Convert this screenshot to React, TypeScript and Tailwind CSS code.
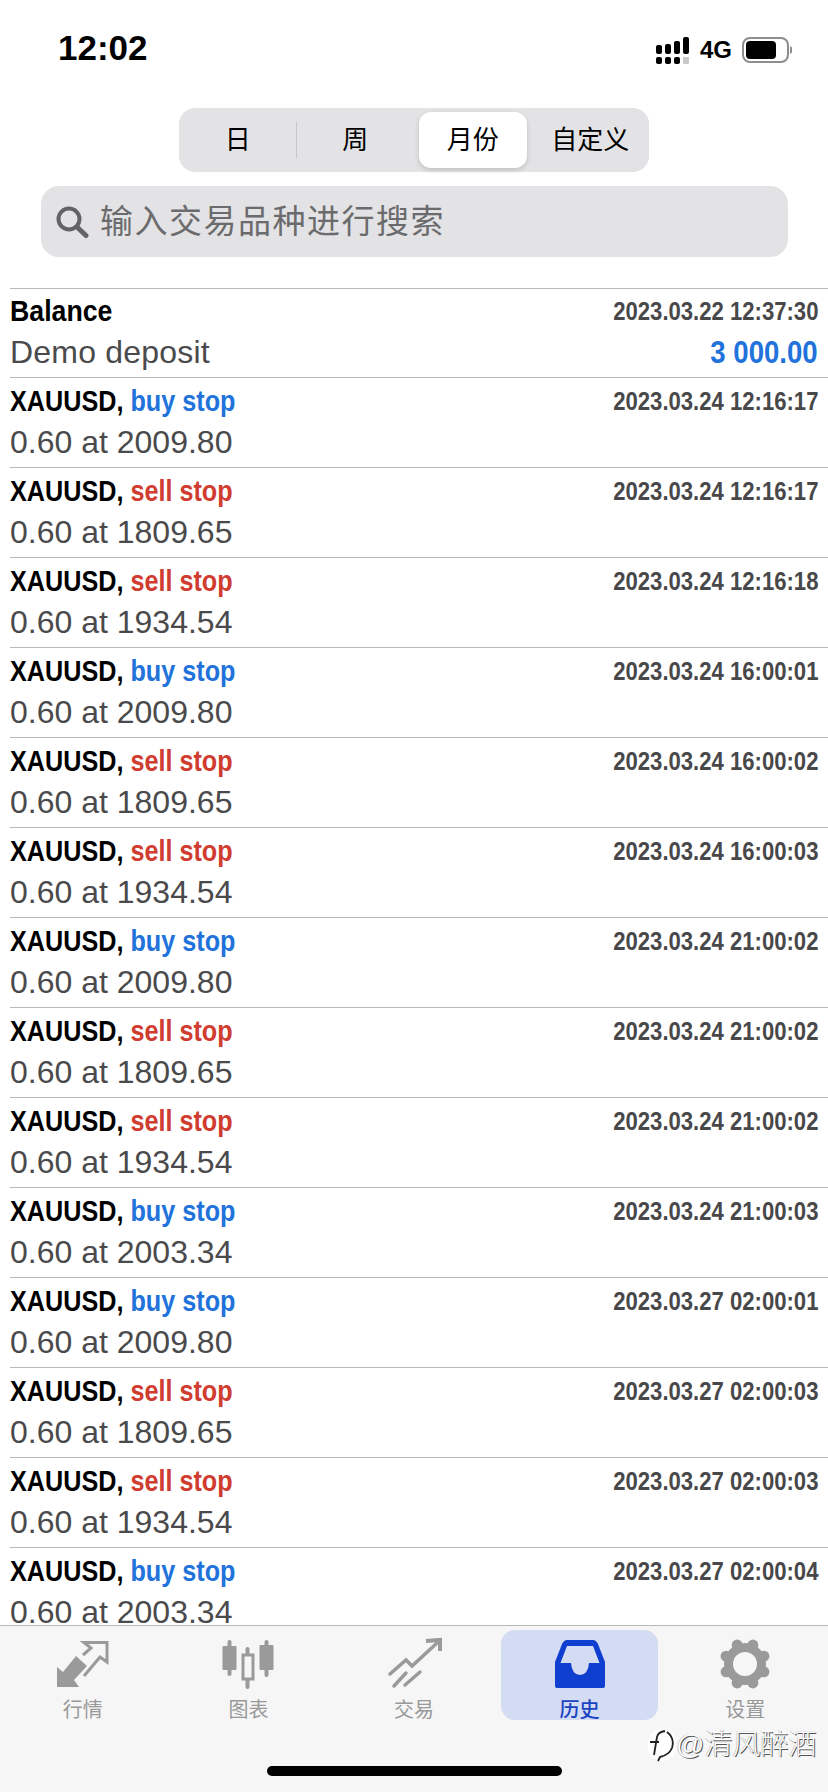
const ROWS = [
  { side: "buy stop", time: "2023.03.24 12:16:17", detail: "0.60 at 2009.80" },
  { side: "sell stop", time: "2023.03.24 12:16:17", detail: "0.60 at 1809.65" },
  { side: "sell stop", time: "2023.03.24 12:16:18", detail: "0.60 at 1934.54" },
  { side: "buy stop", time: "2023.03.24 16:00:01", detail: "0.60 at 2009.80" },
  { side: "sell stop", time: "2023.03.24 16:00:02", detail: "0.60 at 1809.65" },
  { side: "sell stop", time: "2023.03.24 16:00:03", detail: "0.60 at 1934.54" },
  { side: "buy stop", time: "2023.03.24 21:00:02", detail: "0.60 at 2009.80" },
  { side: "sell stop", time: "2023.03.24 21:00:02", detail: "0.60 at 1809.65" },
  { side: "sell stop", time: "2023.03.24 21:00:02", detail: "0.60 at 1934.54" },
  { side: "buy stop", time: "2023.03.24 21:00:03", detail: "0.60 at 2003.34" },
  { side: "buy stop", time: "2023.03.27 02:00:01", detail: "0.60 at 2009.80" },
  { side: "sell stop", time: "2023.03.27 02:00:03", detail: "0.60 at 1809.65" },
  { side: "sell stop", time: "2023.03.27 02:00:03", detail: "0.60 at 1934.54" },
  { side: "buy stop", time: "2023.03.27 02:00:04", detail: "0.60 at 2003.34" },
];

const SEGMENTS = ["日", "周", "月份", "自定义"];

function SignalIcon() {
  return (
    <svg aria-hidden="true" width="34" height="27" viewBox="0 0 34 27">
      <rect x="0" y="8" width="6" height="9" rx="2" fill="#000" />
      <rect x="9" y="7" width="6" height="10" rx="2" fill="#000" />
      <rect x="18" y="4" width="6" height="13" rx="2" fill="#000" />
      <rect x="27" y="0" width="6" height="17" rx="2" fill="#000" />
      <rect x="0" y="20" width="6" height="7" rx="2" fill="#000" />
      <rect x="9" y="20" width="6" height="7" rx="2" fill="#000" />
      <rect x="18" y="20" width="6" height="7" rx="2" fill="#000" />
      <rect x="27" y="20" width="6" height="7" rx="1" fill="#c8c8c8" />
    </svg>
  );
}

function BatteryIcon() {
  return (
    <svg aria-hidden="true" width="50" height="26" viewBox="0 0 50 26">
      <rect x="1" y="1" width="45" height="24" rx="7" fill="#fff" stroke="#8e8e8e" strokeWidth="2" />
      <rect x="4" y="4" width="30" height="18" rx="4" fill="#000" />
      <path d="M48 9 L50 10.5 V15.5 L48 17 Z" fill="#8e8e8e" />
    </svg>
  );
}

function SearchIcon() {
  return (
    <svg aria-hidden="true" width="34" height="32" viewBox="0 0 34 32" fill="none" stroke="#636366">
      <circle cx="14" cy="13" r="10.5" strokeWidth="4" />
      <path d="M22 21 L31 29.5" strokeWidth="5" strokeLinecap="round" />
    </svg>
  );
}

function QuotesIcon() {
  return (
    <svg aria-hidden="true" width="66" height="58" viewBox="0 0 66 58">
      <path d="M7 52 L7 32 L13 37 L26 21 L37 31 L24 45 L29 52 Z" fill="#9a9a9a" />
      <path d="M33 20 L41 13 L34 7.5 L57 7.5 L57 27 L50 22 L34 41" fill="none" stroke="#9a9a9a" strokeWidth="3" />
    </svg>
  );
}

function ChartIcon() {
  return (
    <svg aria-hidden="true" width="60" height="52" viewBox="-1.5 0 60 52" fill="#9a9a9a">
      <rect x="8" y="2" width="4" height="36" rx="2" />
      <rect x="3" y="8" width="14" height="24" rx="1" />
      <rect x="26" y="9" width="4" height="42" rx="2" />
      <rect x="23.5" y="17" width="10" height="24" fill="#f6f6f7" stroke="#9a9a9a" strokeWidth="3" />
      <rect x="45" y="2" width="4" height="37" rx="2" />
      <rect x="40" y="7" width="14" height="25" rx="1" />
    </svg>
  );
}

function TradeIcon() {
  return (
    <svg aria-hidden="true" width="66" height="58" viewBox="0 0 66 58" fill="none" stroke="#9a9a9a" strokeLinecap="round">
      <path d="M9 39 L25 25 L31 31 L56 8" strokeWidth="3.5" />
      <path d="M45 6 L59 5 L59 16" strokeWidth="4" strokeLinecap="butt" />
      <path d="M13 51 L25 38 M24 50 L39 37" strokeWidth="3.5" />
    </svg>
  );
}

function HistoryIcon() {
  return (
    <svg aria-hidden="true" width="66" height="58" viewBox="0 0 66 58">
      <path
        fillRule="evenodd"
        fill="#0f3fd0"
        d="M20 5 H46 Q49 5 51 9 L58 27 V51 Q58 53 56 53 H10 Q8 53 8 51 V27 L15 9 Q17 5 20 5 Z M20 11 L13.5 28 H24 Q25 40 33 40 Q41 40 42 28 H52.5 L46 11 Z"
      />
    </svg>
  );
}

function SettingsIcon() {
  const teeth = [0, 45, 90, 135, 180, 225, 270, 315];
  return (
    <svg aria-hidden="true" width="52" height="52" viewBox="0 0 52 52" fill="#9a9a9a">
      <circle cx="26" cy="26" r="21" />
      {teeth.map((angle) => (
        <circle
          key={angle}
          cx={26 + 20.5 * Math.cos(((angle + 22.5) * Math.PI) / 180)}
          cy={26 + 20.5 * Math.sin(((angle + 22.5) * Math.PI) / 180)}
          r="5.5"
        />
      ))}
      <circle cx="26" cy="26" r="12" fill="#f6f6f7" />
    </svg>
  );
}

const TABS = [
  { label: "行情", icon: <QuotesIcon />, active: false },
  { label: "图表", icon: <ChartIcon />, active: false },
  { label: "交易", icon: <TradeIcon />, active: false },
  { label: "历史", icon: <HistoryIcon />, active: true },
  { label: "设置", icon: <SettingsIcon />, active: false },
];

function HistoryRow({ side, time, detail }: { side: string; time: string; detail: string }) {
  const isBuy = side.startsWith("buy");

  return (
    <div className="h-[90px] shrink-0 border-t border-[#b8b8b8] pr-[10px]">
      <div className="flex h-[46px] items-center justify-between">
        <span className="inline-block origin-left -translate-y-[1px] scale-x-[0.84] text-[30px] font-bold whitespace-nowrap text-black">
          XAUUSD, <span className={isBuy ? "text-[#2272dc]" : "text-[#d03c30]"}>{side}</span>
        </span>
        <span className="inline-block origin-right scale-x-[0.85] text-[26px] font-bold text-[#48484a]">{time}</span>
      </div>
      <div className="flex h-[36px] items-center text-[32px] text-[#4a4a4c]">{detail}</div>
    </div>
  );
}

export default function App() {
  return (
    <div className="relative flex h-[1792px] w-[828px] flex-col overflow-hidden bg-white [font-family:'Liberation_Sans','Noto_Sans_CJK_SC',sans-serif]">
      <div className="flex h-[100px] shrink-0 items-center justify-between pr-[36px] pl-[58px]">
        <span className="-translate-y-[2px] text-[35px] font-bold text-black">12:02</span>
        <div className="flex items-center gap-[10px]">
          <SignalIcon />
          <span className="text-[24px] font-bold text-black">4G</span>
          <BatteryIcon />
        </div>
      </div>

      <div className="mx-auto mt-[8px] grid h-[64px] w-[470px] shrink-0 grid-cols-4 rounded-[16px] bg-[#e3e3e5] text-[26px] text-black">
        {SEGMENTS.map((label, index) => (
          <div key={label} className="relative flex items-center justify-center">
            {index === 2 ? (
              <div className="flex h-[56px] w-[108px] items-center justify-center rounded-[12px] bg-white shadow-[0_2px_5px_rgba(0,0,0,0.16)]">
                {label}
              </div>
            ) : (
              label
            )}
            {index === 0 ? <div className="absolute top-[14px] right-0 h-[36px] w-px bg-[#c6c6c8]" /> : null}
          </div>
        ))}
      </div>

      <div className="mt-[14px] mr-[40px] ml-[41px] flex h-[71px] shrink-0 items-center gap-[11px] rounded-[18px] bg-[#e3e3e5] pl-[14px]">
        <SearchIcon />
        <span className="text-[33px] tracking-[1.5px] text-[#6b6b6d]">输入交易品种进行搜索</span>
      </div>

      <div className="mt-[31px] flex min-h-0 flex-1 flex-col overflow-hidden pl-[10px]">
        <div className="h-[89px] shrink-0 border-t border-[#b8b8b8] pr-[10px]">
          <div className="flex h-[45px] items-center justify-between">
            <span className="inline-block origin-left -translate-y-[1px] scale-x-[0.89] text-[30px] font-bold text-black">Balance</span>
            <span className="inline-block origin-right scale-x-[0.85] text-[26px] font-bold text-[#48484a]">
              2023.03.22 12:37:30
            </span>
          </div>
          <div className="flex h-[36px] items-center justify-between">
            <span className="text-[32px] tracking-[0.2px] text-[#4a4a4c]">Demo deposit</span>
            <span className="inline-block origin-right translate-y-[1px] scale-x-[0.89] text-[31px] font-bold text-[#2272dc]">
              3 000.00
            </span>
          </div>
        </div>
        {ROWS.map((row, index) => (
          <HistoryRow key={index} {...row} />
        ))}
      </div>

      <div className="h-[167px] shrink-0 border-t border-[#b8b8b8] bg-[#f6f6f7] pt-[4px]">
        <nav className="grid grid-cols-5">
          {TABS.map((tab) => (
            <div
              key={tab.label}
              className={`mx-[4px] flex h-[90px] flex-col items-center rounded-[14px] pt-[5px] ${tab.active ? "bg-[#d3dcf3]" : ""}`}
            >
              <div className="flex h-[58px] items-center justify-center">{tab.icon}</div>
              <span className={`mt-[7px] text-[20px] leading-[20px] ${tab.active ? "font-medium text-[#1b44c4]" : "text-[#999999]"}`}>
                {tab.label}
              </span>
            </div>
          ))}
        </nav>
        <div className="mx-auto mt-[46px] h-[10px] w-[295px] rounded-full bg-black" />
      </div>

      <div className="absolute top-[1728px] left-[648px] flex h-[34px] items-center">
        <div className="flex h-[32px] w-[28px] items-center justify-center rounded-[14px] bg-white">
          <svg aria-hidden="true" width="28" height="34" viewBox="0 0 28 34" fill="none" stroke="#222" strokeWidth="1.8">
            <path d="M2 14 H11 M6 27 L9 9 Q10 4 17 3" />
            <path d="M19 4 Q27 10 24 20 Q21 27 12 29 L10 33" />
          </svg>
        </div>
        <span className="text-[28px] leading-none font-light text-white [text-shadow:1px_1px_0_#555,-0.5px_-0.5px_0_#aaa]">@清风醉酒</span>
      </div>
    </div>
  );
}
